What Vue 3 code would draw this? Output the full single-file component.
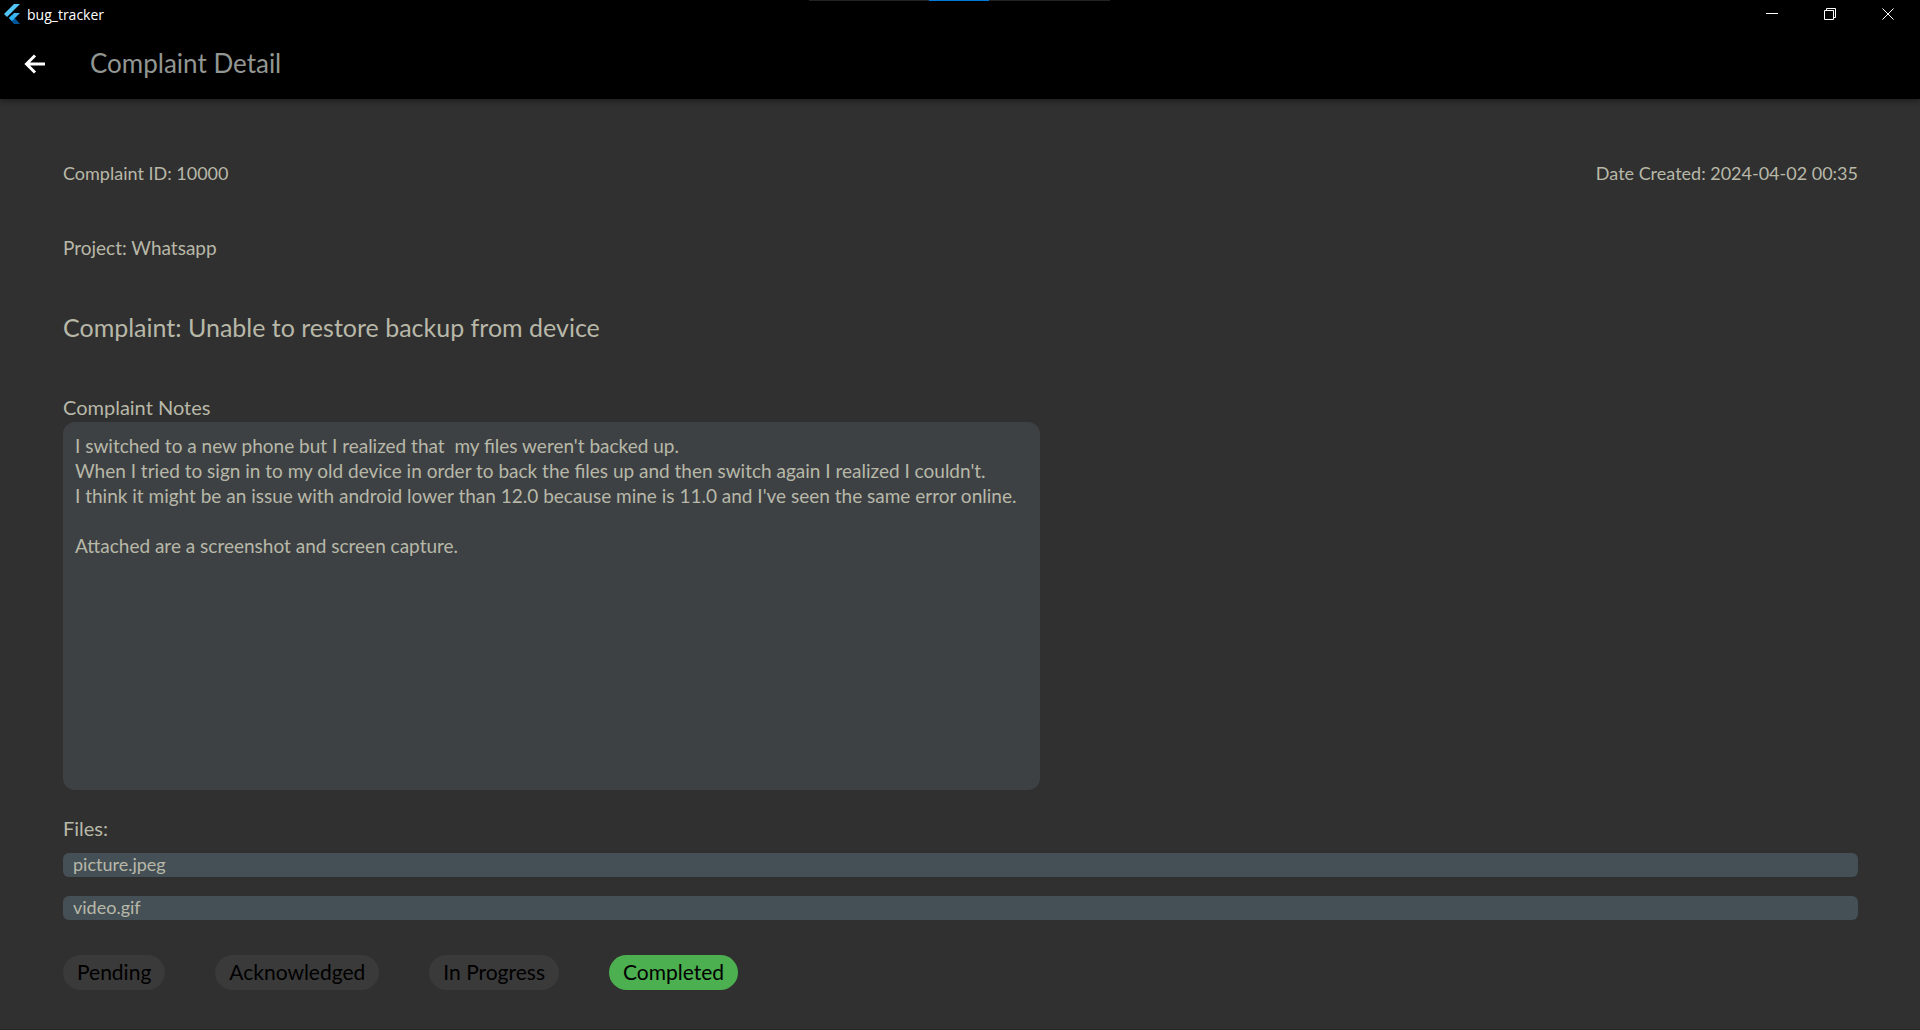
<script setup>
import { ref } from 'vue'

const complaint = {
  id: 10000,
  created: '2024-04-02 00:35',
  project: 'Whatsapp',
  title: 'Unable to restore backup from device',
  notes: [
    "I switched to a new phone but I realized that  my files weren't backed up.",
    "When I tried to sign in to my old device in order to back the files up and then switch again I realized I couldn't.",
    "I think it might be an issue with android lower than 12.0 because mine is 11.0 and I've seen the same error online.",
    '',
    'Attached are a screenshot and screen capture.',
  ].join('\n'),
  files: ['picture.jpeg', 'video.gif'],
}

const statuses = ['Pending', 'Acknowledged', 'In Progress', 'Completed']
const current = ref('Completed')
</script>

<template>
  <div class="window">
    <div class="top-strip"><span class="top-strip-active"></span></div>

    <header class="titlebar">
      <svg class="logo" width="16" height="20" viewBox="0 0 16 20" aria-hidden="true">
        <path d="M10 0H16L3 13L0 10Z" fill="#54c5f8" />
        <path d="M10 9H16L8 17L5 14Z" fill="#3fb6f0" />
        <path d="M5 14L8 11L16 20H10Z" fill="#01579b" />
        <path d="M5 14L8 11L11 14L8 17Z" fill="#29b6f6" />
      </svg>
      <span class="app-name">bug_tracker</span>
      <div class="window-controls">
        <button type="button" aria-label="Minimize">
          <svg width="12" height="12" viewBox="0 0 12 12"><path d="M0 5.5H12" /></svg>
        </button>
        <button type="button" aria-label="Restore">
          <svg width="12" height="12" viewBox="0 0 12 12">
            <path d="M.5 2.5H9.500V11.500H.5ZM2.500 2.500V.5H11.500V9.500H9.500" />
          </svg>
        </button>
        <button type="button" aria-label="Close">
          <svg width="12" height="12" viewBox="0 0 12 12"><path d="M.5 .5L11.500 11.500M11.500 .5L.5 11.500" /></svg>
        </button>
      </div>
    </header>

    <nav class="appbar">
      <button type="button" class="back" aria-label="Back">
        <svg width="22" height="20" viewBox="0 0 22 20"><path d="M21 10H2.500M11 1.500L2.500 10L11 18.500" /></svg>
      </button>
      <h1>Complaint Detail</h1>
    </nav>

    <main>
      <div class="meta">
        <span>Complaint ID: {{ complaint.id }}</span>
        <span>Date Created: {{ complaint.created }}</span>
      </div>
      <p class="project">Project: {{ complaint.project }}</p>
      <h2>Complaint: {{ complaint.title }}</h2>

      <h3 id="notes-label">Complaint Notes</h3>
      <div class="notes" role="region" aria-labelledby="notes-label">{{ complaint.notes }}</div>

      <h3 class="files-label">Files:</h3>
      <ul class="files">
        <li v-for="file in complaint.files" :key="file">
          <button type="button">{{ file }}</button>
        </li>
      </ul>

      <div class="statuses">
        <button
          v-for="status in statuses"
          :key="status"
          type="button"
          :class="{ active: status === current }"
          :aria-pressed="status === current"
          @click="current = status"
        >{{ status }}</button>
      </div>
    </main>
  </div>
</template>

<style>
body {
  background: #303030;
}
</style>

<style scoped>
.window {
  position: relative;
  min-height: 100vh;
  box-sizing: border-box;
  border-bottom: 1px solid #272727;
  background: #303030;
  color: #b8b8a8;
  font: 18px/24px Lato, 'Open Sans', sans-serif;
}
h1, h2, h3, p, ul {
  margin: 0;
  padding: 0;
  font-weight: 400;
}
button {
  border: 0;
  margin: 0;
  padding: 0;
  background: none;
  color: inherit;
  font: inherit;
}
.top-strip {
  position: absolute;
  top: 0;
  left: calc(50% - 151px);
  width: 301px;
  height: 1px;
  background: #222;
  display: flex;
}
.top-strip-active {
  width: 60px;
  margin-left: 120px;
  background: #0078d7;
}
.titlebar {
  display: flex;
  align-items: center;
  height: 28px;
  padding: 0 3px 0 4px;
  background: #000;
  color: #fff;
}
.app-name {
  margin-left: 7px;
  padding-top: 2px;
  font: 14px/26px 'Open Sans', sans-serif;
}
.window-controls {
  display: flex;
  margin-left: auto;
}
.window-controls button {
  display: grid;
  place-items: center;
  width: 58px;
  height: 28px;
}
.window-controls svg {
  fill: none;
  stroke: #fff;
}
.appbar {
  position: relative;
  display: flex;
  align-items: center;
  height: 71px;
  padding-left: 24px;
  background: #000;
  box-shadow: 0 2px 6px rgb(0 0 0 / 40%);
}
.back {
  display: grid;
}
.back svg {
  fill: none;
  stroke: #fff;
  stroke-width: 3;
}
h1 {
  margin-left: 44px;
  padding-bottom: 2px;
  color: #929692;
  font-size: 26px;
  line-height: 32px;
}
main {
  padding: 62px 62px 38px 63px;
}
.meta {
  display: flex;
  justify-content: space-between;
}
.project {
  margin-top: 51px;
  font-size: 19px;
}
h2 {
  margin-top: 51px;
  font-size: 25px;
  line-height: 32px;
}
h3 {
  margin-top: 50px;
  font-size: 20px;
  line-height: 28px;
}
.notes {
  box-sizing: border-box;
  width: 977px;
  max-width: 100%;
  min-height: 368px;
  margin-top: 1px;
  padding: 11px 12px;
  border-radius: 12px;
  background: #3d4144;
  font-size: 19px;
  line-height: 25px;
  white-space: pre-wrap;
}
h3.files-label {
  margin-top: 24px;
}
.files {
  display: grid;
  gap: 19px;
  margin-top: 11px;
  list-style: none;
}
.files li {
  display: grid;
}
.files button {
  padding: 0 10px 2px;
  border-radius: 6px;
  background: #455056;
  line-height: 22px;
  text-align: left;
}
.statuses {
  display: flex;
  flex-wrap: wrap;
  gap: 50px;
  margin-top: 35px;
}
.statuses button {
  padding: 0 14px 1px;
  border-radius: 18px;
  background: #3a3a3a;
  color: #000;
  font-size: 21px;
  line-height: 34px;
}
.statuses button.active {
  background: #4caf50;
}
</style>
